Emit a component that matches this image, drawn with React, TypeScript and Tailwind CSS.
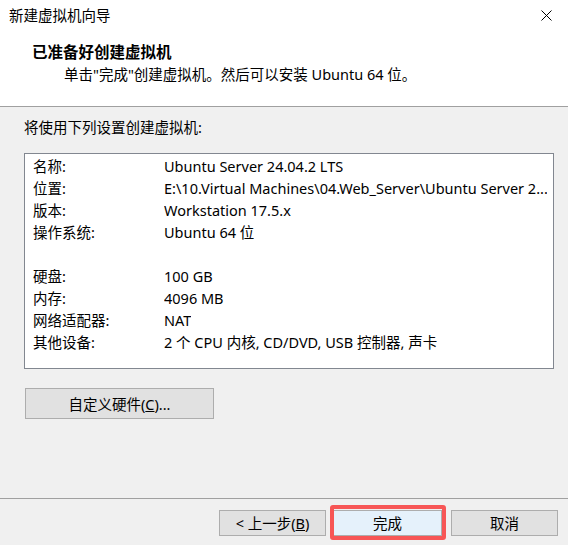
type Row = { label: string; value: string };

const general: Row[] = [
  { label: "名称:", value: "Ubuntu Server 24.04.2 LTS" },
  { label: "位置:", value: "E:\\10.Virtual Machines\\04.Web_Server\\Ubuntu Server 2..." },
  { label: "版本:", value: "Workstation 17.5.x" },
  { label: "操作系统:", value: "Ubuntu 64 位" },
];

const hardware: Row[] = [
  { label: "硬盘:", value: "100 GB" },
  { label: "内存:", value: "4096 MB" },
  { label: "网络适配器:", value: "NAT" },
  { label: "其他设备:", value: "2 个 CPU 内核, CD/DVD, USB 控制器, 声卡" },
];

function SummaryRow({ row }: { row: Row }) {
  return (
    <div className="flex h-[22px] items-center">
      <span className="w-[131px] shrink-0">{row.label}</span>
      <span className="overflow-hidden whitespace-nowrap">{row.value}</span>
    </div>
  );
}

function WinButton({ children, className = "" }: { children: React.ReactNode; className?: string }) {
  return (
    <button className={`flex items-center justify-center border border-[#adadad] bg-[#e1e1e1] text-[14.5px] text-black ${className}`}>
      {children}
    </button>
  );
}

export default function App() {
  return (
    <div className="flex h-[545px] w-[568px] flex-col bg-[#f0f0f0] font-['Noto_Sans','Noto_Sans_CJK_SC',sans-serif] text-[14.5px] leading-[20px] text-black">
      {/* header */}
      <div className="h-[106px] bg-white">
        <div className="flex h-[30px] items-center justify-between pl-[9px] pr-[16px]">
          <span>新建虚拟机向导</span>
          <svg width="11" height="11" viewBox="0 0 11 11" className="text-black">
            <path d="M0.5 0.5 L10.5 10.5 M10.5 0.5 L0.5 10.5" stroke="currentColor" strokeWidth="1" />
          </svg>
        </div>
        <div className="mt-[12px] pl-[32px] text-[15.5px] font-bold">已准备好创建虚拟机</div>
        <div className="mt-[2px] pl-[64px]">单击"完成"创建虚拟机。然后可以安装 Ubuntu 64 位。</div>
      </div>
      <div className="border-t border-[#a0a0a0]" />

      {/* body */}
      <div className="flex flex-1 flex-col pl-[24px]">
        <div className="mt-[10px]">将使用下列设置创建虚拟机:</div>
        <div className="mt-[16px] h-[216px] w-[530px] border border-[#828790] bg-white pl-[8px] pr-[6px] pt-[1px]">
          {general.map(r => (
            <SummaryRow key={r.label} row={r} />
          ))}
          <div className="h-[22px]" />
          {hardware.map(r => (
            <SummaryRow key={r.label} row={r} />
          ))}
        </div>
        <WinButton className="ml-[1px] mt-[19px] h-[31px] w-[189px]">
          自定义硬件(<span className="underline">C</span>)...
        </WinButton>
      </div>

      {/* footer */}
      <div className="border-t border-[#a0a0a0]" />
      <div className="flex h-[46px] items-start justify-end pr-[10px] pt-[11px]">
        <WinButton className="h-[26px] w-[107px]">
          &lt; 上一步(<span className="underline">B</span>)
        </WinButton>
        <div className="relative ml-[7px]">
          <WinButton className="h-[26px] w-[109px] border-[#0078d7] bg-[#e5f1fb]">完成</WinButton>
          <span className="pointer-events-none absolute -bottom-[4px] -left-[3px] -right-[4px] -top-[5px] rounded-[3px] border-[4px] border-[#f75656]" />
        </div>
        <WinButton className="ml-[9px] h-[26px] w-[107px]">取消</WinButton>
      </div>
    </div>
  );
}
